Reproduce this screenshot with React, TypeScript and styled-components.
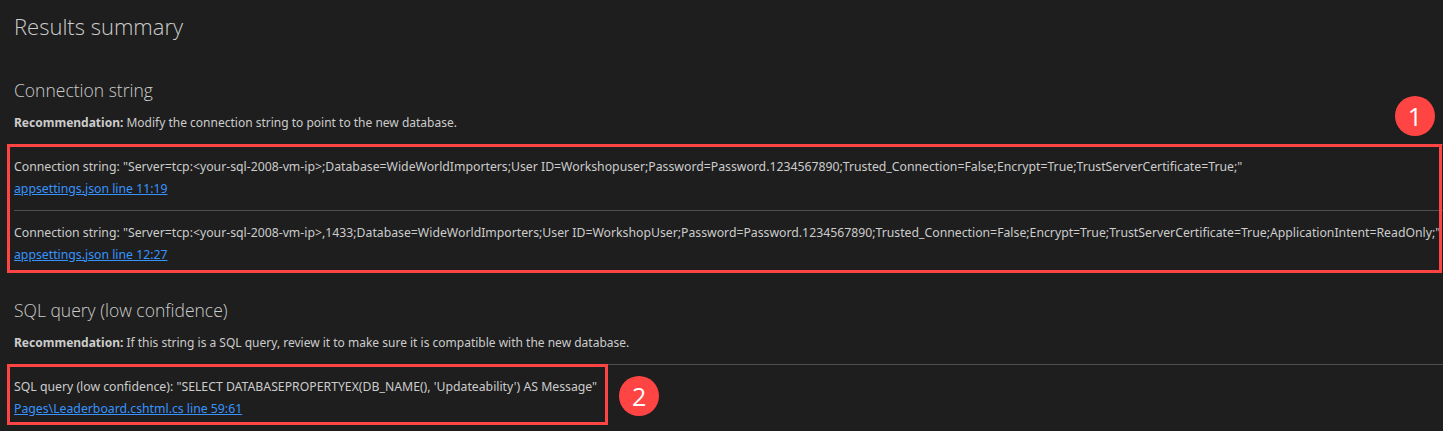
import React from 'react';
import styled, { createGlobalStyle } from 'styled-components';

const Colors = {
  bg: '#1e1e1e',
  text: '#cccccc',
  link: '#3794ff',
  divider: '#4f4f4f',
  mark: '#ff4444',
};

const GlobalStyle = createGlobalStyle`
  html, body {
    margin: 0;
    padding: 0;
    background: ${Colors.bg};
  }
  body {
    font-family: "Noto Sans", "Open Sans", sans-serif;
    color: ${Colors.text};
  }
`;

const Page = styled.div`
  width: 1443px;
  height: 431px;
  box-sizing: border-box;
  padding: 10px 0 0 14px;
  overflow: hidden;
`;

const Title = styled.h1`
  margin: 0 0 36px;
  font-family: "Open Sans", sans-serif;
  font-weight: 300;
  font-size: 22px;
  line-height: 32px;
`;

const Section = styled.section`
  margin-bottom: 22px;
`;

const SectionTitle = styled.h2`
  margin: 0 0 12px;
  font-family: "Open Sans", sans-serif;
  font-weight: 300;
  font-size: 17.5px;
  line-height: 24px;
`;

const Recommendation = styled.p`
  margin: 0 0 12px;
  font-size: 12px;
  line-height: 18px;

  & > b {
    font-weight: 700;
  }
`;

const List = styled.div`
  border-top: 1px solid ${Colors.divider};
`;

const Item = styled.div`
  padding: 13px 0 12px;
  font-size: 12.25px;
  line-height: 18px;

  & + & {
    border-top: 1px solid ${Colors.divider};
  }
`;

const Detail = styled.div`
  white-space: nowrap;
  margin-bottom: 4px;
`;

const SourceLink = styled.a`
  display: block;
  width: fit-content;
  color: ${Colors.link};
  text-decoration: underline;
  cursor: pointer;
`;

const Annotated = styled.div<{ $fit?: boolean }>`
  position: relative;
  width: ${({ $fit }) => ($fit ? 'fit-content' : 'auto')};

  &::after {
    content: '';
    position: absolute;
    top: -1px;
    bottom: ${({ $fit }) => ($fit ? '5px' : '3px')};
    left: -7px;
    right: ${({ $fit }) => ($fit ? '-11px' : '1px')};
    border: 3px solid ${Colors.mark};
    pointer-events: none;
  }
`;

const Badge = styled.span<{ $side: 'top' | 'right' }>`
  position: absolute;
  width: 40px;
  height: 40px;
  border-radius: 50%;
  background: ${Colors.mark};
  color: #fff;
  font-family: "Open Sans", sans-serif;
  font-size: 25px;
  line-height: 40px;
  text-align: center;
  ${({ $side }) =>
    $side === 'top'
      ? 'top: -49px; right: 8px;'
      : 'top: 50%; margin-top: -22px; right: -62px;'}
`;

interface Finding {
  label: string;
  value: string;
  source: string;
}

const connectionFindings: Finding[] = [
  {
    label: 'Connection string',
    value:
      'Server=tcp:<your-sql-2008-vm-ip>;Database=WideWorldImporters;User ID=Workshopuser;Password=Password.1234567890;Trusted_Connection=False;Encrypt=True;TrustServerCertificate=True;',
    source: 'appsettings.json line 11:19',
  },
  {
    label: 'Connection string',
    value:
      'Server=tcp:<your-sql-2008-vm-ip>,1433;Database=WideWorldImporters;User ID=WorkshopUser;Password=Password.1234567890;Trusted_Connection=False;Encrypt=True;TrustServerCertificate=True;ApplicationIntent=ReadOnly;',
    source: 'appsettings.json line 12:27',
  },
];

const queryFindings: Finding[] = [
  {
    label: 'SQL query (low confidence)',
    value: "SELECT DATABASEPROPERTYEX(DB_NAME(), 'Updateability') AS Message",
    source: 'Pages\\Leaderboard.cshtml.cs line 59:61',
  },
];

const FindingItem: React.FC<{ finding: Finding }> = ({ finding }) => (
  <Item>
    <Detail>
      {finding.label}: "{finding.value}"
    </Detail>
    <SourceLink>{finding.source}</SourceLink>
  </Item>
);

const App: React.FC = () => (
  <>
    <GlobalStyle />
    <Page>
      <Title>Results summary</Title>

      <Section>
        <SectionTitle>Connection string</SectionTitle>
        <Recommendation>
          <b>Recommendation:</b> Modify the connection string to point to the new database.
        </Recommendation>
        <List>
          <Annotated>
            {connectionFindings.map((f) => (
              <FindingItem key={f.source} finding={f} />
            ))}
            <Badge $side="top">1</Badge>
          </Annotated>
        </List>
      </Section>

      <Section>
        <SectionTitle>SQL query (low confidence)</SectionTitle>
        <Recommendation>
          <b>Recommendation:</b> If this string is a SQL query, review it to make sure it is compatible with the new database.
        </Recommendation>
        <List>
          <Annotated $fit>
            {queryFindings.map((f) => (
              <FindingItem key={f.source} finding={f} />
            ))}
            <Badge $side="right">2</Badge>
          </Annotated>
        </List>
      </Section>
    </Page>
  </>
);

export default App;
